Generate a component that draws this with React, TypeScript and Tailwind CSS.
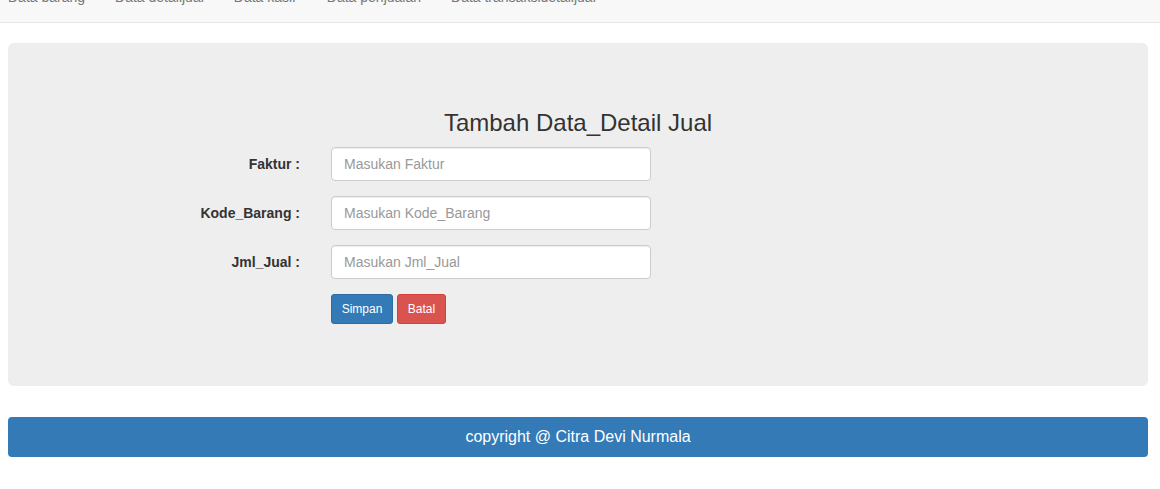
import React from 'react';

const navItems = ['Data barang', 'Data detailjual', 'Data kasir', 'Data penjualan', 'Data transaksidetailjual'];

const fields = [
  { label: 'Faktur :', placeholder: 'Masukan Faktur' },
  { label: 'Kode_Barang :', placeholder: 'Masukan Kode_Barang' },
  { label: 'Jml_Jual :', placeholder: 'Masukan Jml_Jual' },
];

const App: React.FC = () => {
  return (
    <div className="min-h-[489px] bg-white text-[#333] font-['Liberation_Sans',Arial,sans-serif] text-[14px]">
      {/* Navbar (page is scrolled, only the bottom shows) */}
      <nav className="h-[23px] overflow-hidden bg-[#f8f8f8] border-b border-[#e7e7e7]">
        <ul className="-mt-[28px] h-[50px] flex -ml-[7px]">
          {navItems.map((item) => (
            <li key={item}>
              <a className="block px-[15px] py-[15px] leading-5 text-[#777]">{item}</a>
            </li>
          ))}
        </ul>
      </nav>

      <div className="pl-[8px] pr-[12px]">
        {/* Jumbotron with form */}
        <div className="mt-[20px] bg-[#eeeeee] rounded-[6px] pt-[67px] pb-[62px]">
          <h2 className="text-center text-[24px] leading-[26px] text-[#333] mb-[11px]">
            Tambah Data_Detail Jual
          </h2>
          <form className="flex flex-col gap-[15px]">
            {fields.map((f) => (
              <div key={f.label} className="flex items-center">
                <label className="w-[292px] text-right font-bold text-[14px] leading-5 text-[#333]">
                  {f.label}
                </label>
                <input
                  type="text"
                  placeholder={f.placeholder}
                  className="ml-[31px] w-[320px] h-[34px] px-[12px] bg-white border border-[#ccc] rounded-[4px] text-[14px] text-[#555] placeholder:text-[#999] shadow-[inset_0_1px_1px_rgba(0,0,0,0.075)] outline-none"
                />
              </div>
            ))}
            <div className="flex ml-[323px] gap-[4px]">
              <button
                type="button"
                className="h-[30px] w-[62px] bg-[#337ab7] border border-[#2e6da4] rounded-[3px] text-white text-[12px] leading-[1.5]"
              >
                Simpan
              </button>
              <button
                type="button"
                className="h-[30px] w-[49px] bg-[#d9534f] border border-[#d43f3a] rounded-[3px] text-white text-[12px] leading-[1.5]"
              >
                Batal
              </button>
            </div>
          </form>
        </div>

        {/* Footer */}
        <footer className="mt-[31px] h-[40px] bg-[#337ab7] rounded-[4px] flex items-center justify-center text-white text-[16px]">
          copyright @ Citra Devi Nurmala
        </footer>
      </div>
    </div>
  );
};

export default App;
